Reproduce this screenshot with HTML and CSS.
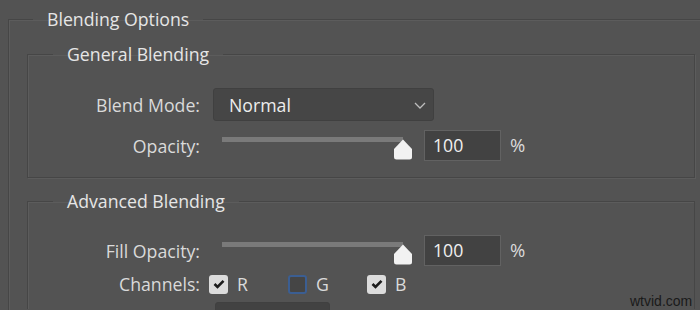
FILE: index.html
```html
<!DOCTYPE html>
<html lang="en">
<head>
    <meta charset="UTF-8">
    <meta name="viewport" content="width=device-width, initial-scale=1.0">
    <title>Blending Options</title>
    <link rel="stylesheet" href="styles.css">
</head>
<body>
    <fieldset class="panel">
        <legend>Blending Options</legend>

        <!-- General Blending -->
        <fieldset class="group">
            <legend>General Blending</legend>

            <div class="row">
                <div class="label">Blend Mode:</div>
                <div class="select">
                    <span>Normal</span>
                    <svg class="chevron" width="12" height="7" viewBox="0 0 12 7">
                        <path d="M1 1 L6 6 L11 1" fill="none" stroke="#bdbdbd" stroke-width="1.3"/>
                    </svg>
                </div>
            </div>

            <div class="row row-slider">
                <div class="label">Opacity:</div>
                <div class="slider">
                    <div class="track"></div>
                    <svg class="thumb" width="20" height="21" viewBox="0 0 20 21">
                        <path d="M10 0.5 L19 10 L19 18 Q19 20.5 16.5 20.5 L3.5 20.5 Q1 20.5 1 18 L1 10 Z" fill="#f2f2f2"/>
                    </svg>
                </div>
                <div class="num">100</div>
                <div class="unit">%</div>
            </div>
        </fieldset>

        <!-- Advanced Blending -->
        <fieldset class="group group-adv">
            <legend>Advanced Blending</legend>

            <div class="row row-slider">
                <div class="label">Fill Opacity:</div>
                <div class="slider">
                    <div class="track"></div>
                    <svg class="thumb" width="20" height="21" viewBox="0 0 20 21">
                        <path d="M10 0.5 L19 10 L19 18 Q19 20.5 16.5 20.5 L3.5 20.5 Q1 20.5 1 18 L1 10 Z" fill="#f2f2f2"/>
                    </svg>
                </div>
                <div class="num">100</div>
                <div class="unit">%</div>
            </div>

            <div class="row row-channels">
                <div class="label">Channels:</div>
                <div class="channels">
                    <div class="channel">
                        <span class="box checked">
                            <svg width="12" height="10" viewBox="0 0 12 10">
                                <path d="M1.5 5 L4.5 8 L10.5 1.8" fill="none" stroke="#1c1c1c" stroke-width="2.6"/>
                            </svg>
                        </span>
                        <span>R</span>
                    </div>
                    <div class="channel">
                        <span class="box focus"></span>
                        <span>G</span>
                    </div>
                    <div class="channel">
                        <span class="box checked">
                            <svg width="12" height="10" viewBox="0 0 12 10">
                                <path d="M1.5 5 L4.5 8 L10.5 1.8" fill="none" stroke="#1c1c1c" stroke-width="2.6"/>
                            </svg>
                        </span>
                        <span>B</span>
                    </div>
                </div>
            </div>

            <div class="row row-knockout">
                <div class="label"></div>
                <div class="select select-dark"></div>
            </div>
        </fieldset>
    </fieldset>

    <div class="watermark">wtvid.com</div>
</body>
</html>
```

FILE: styles.css
```css
/* Base */
* {
    margin: 0;
    padding: 0;
    box-sizing: border-box;
}

html, body {
    width: 700px;
    height: 310px;
    overflow: hidden;
}

body {
    background: #535353;
    font-family: "Open Sans", "Noto Sans", sans-serif;
    color: #dadada;
    position: relative;
}

fieldset {
    border: 1px solid #464646;
    box-shadow: 1px 1px 0 #5c5c5c, inset 1px 1px 0 #5c5c5c;
}

legend {
    font-size: 17.7px;
    line-height: 24px;
    color: #e6e6e6;
    padding: 0 14px;
}

/* The outer panel runs off the right and bottom of the window */
.panel {
    width: 692px;
    height: 303px;
    margin: 7px 0 0 8px;
    padding: 0 0 0 18px;
    border-right: none;
    border-bottom: none;
    overflow: hidden;
}

.panel > legend {
    margin-left: 6px;
}

.group {
    width: 668px;
    margin-top: 11px;
    padding: 22px 0 16px 0;
}

.group > legend {
    margin-left: 25px;
}

.group-adv {
    height: 120px;
    padding-top: 22px;
    border-bottom: none;
    box-shadow: inset 1px 1px 0 #5c5c5c;
}

/* Rows */
.row {
    display: flex;
    align-items: center;
    height: 33px;
}

.label {
    width: 172px;
    text-align: right;
    font-size: 17.7px;
    margin-right: 13px;
    flex-shrink: 0;
}

.row-slider {
    margin-top: 9px;
    height: 31px;
}

.group-adv .row-slider {
    margin-top: 0;
}

.select {
    width: 221px;
    height: 33px;
    background: #464646;
    border: 1px solid #404040;
    border-radius: 3px;
    display: flex;
    align-items: center;
    justify-content: space-between;
    padding: 0 7px 0 15px;
    font-size: 17.7px;
    color: #ededed;
}

.chevron {
    margin-top: 2px;
}

/* Slider */
.slider {
    position: relative;
    width: 200px;
    height: 31px;
}

.track {
    position: absolute;
    left: 9px;
    right: 10px;
    top: 7px;
    height: 5px;
    background: #7a7a7a;
}

.thumb {
    position: absolute;
    right: 0;
    top: 9px;
}

.num {
    width: 77px;
    height: 31px;
    margin-left: 11px;
    background: #424242;
    border: 1px solid #626262;
    font-size: 17.7px;
    line-height: 29px;
    padding-left: 8px;
    color: #f0f0f0;
}

.unit {
    margin-left: 9px;
    font-size: 18.5px;
    margin-top: -2px;
}

/* Channels */
.row-channels {
    height: 20px;
    margin-top: 8px;
}

.row-channels .label {
    margin-right: 9px;
}

.channels {
    display: flex;
}

.channel {
    width: 79px;
    display: flex;
    align-items: center;
    gap: 9px;
    font-size: 17.7px;
}

.box {
    width: 19px;
    height: 19px;
    border-radius: 3px;
    display: flex;
    align-items: center;
    justify-content: center;
}

.box.checked {
    background: #dcdcdc;
}

.box.focus {
    background: #454545;
    border: 2px solid #3b5e92;
}

.row-knockout {
    margin-top: 8px;
}

.row-knockout .label {
    margin-right: 15px;
}

.select-dark {
    background: #424242;
    width: 115px;
}

.watermark {
    position: absolute;
    left: 630px;
    top: 293px;
    font-family: "Liberation Sans", Arial, sans-serif;
    font-size: 14px;
    color: #1a1a1a;
}
```
